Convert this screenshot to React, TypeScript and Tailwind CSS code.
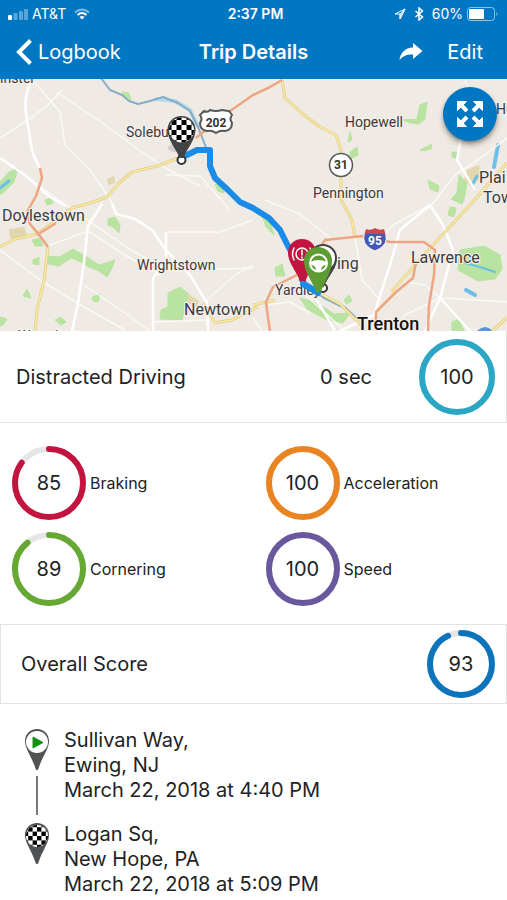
import type { ReactNode } from "react";

const CHECKS = [0, 1, 2, 3, 4, 5].flatMap((row) =>
  [0, 1, 2, 3, 4, 5].filter((col) => (row + col) % 2 === 0).map((col) => ({ row, col })),
);

function CheckeredDisc({ id, cx, cy, r }: { id: string; cx: number; cy: number; r: number }) {
  const size = (r * 2) / 5;
  return (
    <g>
      <clipPath id={id}>
        <circle cx={cx} cy={cy} r={r} />
      </clipPath>
      <circle cx={cx} cy={cy} r={r} fill="#fff" />
      <g clipPath={`url(#${id})`}>
        {CHECKS.map(({ row, col }) => (
          <rect
            key={`${row}-${col}`}
            x={cx - r + (col - 0.5) * size}
            y={cy - r + (row - 0.5) * size}
            width={size}
            height={size}
            fill="#000"
          />
        ))}
      </g>
    </g>
  );
}

function Pin({ id, kind }: { id: string; kind: "start" | "end" }) {
  return (
    <svg viewBox="0 0 26 44" className="h-11 w-[26px]" aria-hidden="true">
      <path d="M13 1C6 1 1 6.400 1 13c0 8 6.500 15 10.500 27.500.6 2 2.400 2 3 0C18.500 28 25 21 25 13 25 6.400 20 1 13 1z" fill="#505254" />
      {kind === "start" ? (
        <>
          <circle cx="13" cy="14" r="11" fill="#fff" />
          <path d="M9 9v11l10-5.500z" fill="#129412" stroke="#129412" strokeLinejoin="round" />
        </>
      ) : (
        <CheckeredDisc id={id} cx={13} cy={14} r={11} />
      )}
    </svg>
  );
}

function Ring({ value, color, size, box }: { value: number; color: string; size: number; box: string }) {
  const r = size / 2 - 3;
  const length = 2 * Math.PI * r;
  return (
    <div className={`relative flex shrink-0 items-center justify-center ${box}`}>
      <svg viewBox={`0 0 ${size} ${size}`} className="absolute inset-0 size-full -rotate-90" aria-hidden="true">
        <circle cx={size / 2} cy={size / 2} r={r} fill="none" stroke="#e6e6e8" strokeWidth="6" />
        <circle
          cx={size / 2}
          cy={size / 2}
          r={r}
          fill="none"
          stroke={color}
          strokeWidth="6"
          strokeLinecap="round"
          strokeDasharray={value === 100 ? undefined : `${(length * value) / 100} ${length}`}
        />
      </svg>
      <span className="text-xl">{value}</span>
    </div>
  );
}

function Metric({ value, color, label }: { value: number; color: string; label: string }) {
  return (
    <div className="flex items-center gap-1 pl-3">
      <Ring value={value} color={color} size={74} box="size-[74px]" />
      <span className="text-base">{label}</span>
    </div>
  );
}

const MINOR_ROADS = [
  "M35 83L60 112 65 145 90 170 105 192 115 208",
  "M57 92L98 120 135 147 165 168 200 186",
  "M0 158L45 190 80 215 128 248 165 270",
  "M0 250L40 280 84 307 125 330",
  "M62 90L48 105 25 122 0 138",
  "M48 246L88 231 125 255 160 275",
  "M84 285L125 313 150 331",
  "M253 220L220 232 166 232",
  "M253 268L160 271",
  "M207 300L235 275 253 265",
  "M153 322L210 320",
  "M165 175L200 176 230 210",
  "M265 200L300 214 330 238",
  "M380 240L393 225 430 205",
  "M465 80L472 100",
  "M507 138L478 160 455 175 430 207 418 215",
  "M395 331L405 315 440 298 507 302",
  "M440 298L425 285 405 282",
  "M300 290L345 331",
  "M266 305L290 302 310 313",
  "M355 237L362 280 380 300",
  "M253 318L262 331",
];

const MAJOR_ROADS = [
  "M30 84C23 100 25 112 29 130 31 150 33 156 40 168",
  "M0 158L25 175 50 197 66 206",
  "M102 204L88 226 84 262 78 303 72 331",
  "M112 204L116 214 135 219 152 230 166 250 190 275 207 303 208 331",
  "M153 331V278L166 262V232",
  "M462 132L457 160 475 190",
  "M430 205L400 230 393 255 374 315 340 331",
  "M430 205L443 225 453 250 440 298 425 331",
  "M440 298L470 331",
  "M300 283L320 305 335 331",
];

const YELLOW_ROADS = [
  "M181 157L157 166 132 172 119 183 107 197 90 203 72 208 54 222 37 234 15 239 0 247",
  "M48 247L44 280 37 310 35 331",
  "M282 80L285 98 303 114 320 127 336 135 341 150 341 200 352 220 355 237",
  "M507 163L470 205 433 245 391 292",
  "M203 303L215 323 232 320 258 307",
  "M253 305L275 300",
  "M318 292L340 304 362 326",
  "M507 318L492 331",
];

const ORANGE_ROADS = [
  "M40 168L42 178 36 196 27 212 30 224 40 236 48 247",
  "M37 235L56 223",
  "M196 138L220 118 253 95 270 87 282 80",
  "M297 275L273 287 266 302 268 318 270 331",
  "M320 248L325 240 363 236 390 242 424 242 435 250 434 275 429 305 428 331",
  "M416 262L413 278 396 292 376 312 376 322",
];

const PARKS = [
  "M0 182l9-10 9-4-4 14-9 9-5 4z",
  "M48 256l12 1 13-8 14 8 12 8 16-5-3 8-5 9-8-6-10-4-10-6-8-3-12 8-11-2z",
  "M108 219l7-2 5 8-1 8-6-6-5-2z",
  "M168 293l12-6 10 8-5 12-3 13-22-1 1-9 7-3z",
  "M32 240l8-2 3 8-8 0z",
  "M33 260l6-3 0 8-6-1z",
  "M23 296l4-7 4 9z",
  "M92 297l8-3-2 8-5-1z",
  "M55 320l6-3 5 5-5 3z",
  "M0 317l7 2-4 6-3 1z",
  "M403 120l14-1 3-14 7-3-2 17-6 5-8-1z",
  "M350 132l2 8-4 2z",
  "M350 152l7-5 1 8-8 4z",
  "M420 150l12-6-1 5-9 2z",
  "M428 180l11 6-1 6-8-3z",
  "M452 152l6 0 0 7-6-2z",
  "M459 175l8 8-2 12-3 9-11-5 6-6z",
  "M450 207l6 1-2 9-6-2z",
  "M460 250l24-4 16 9 2 14-7 10-17 2-20-11z",
  "M275 268l7-4 3 12-9 0z",
  "M300 298l16 4 18 12 16-1-7 10-18-4-18-10z",
  "M344 300l5-5 3 6-6 3z",
  "M262 215l8 6 4 14-8-8z",
  "M400 322l5 4-3 5-5 0z",
  "M452 322l7-3 5 12-12 0z",
  "M45 200l6-2 2 5-6 2z",
  "M122 92l7 1 2 7-8-4z",
  "M215 184l6 2 3 7-6-2z",
];

const ROUTE =
  "M187 155L197 150 210 150 210 166 215 178 228 190 240 202 253 208 269 218 280 230 288 246 296 260 304 284 318 292";

function TripMap() {
  return (
    <svg
      viewBox="0 79 507 252"
      preserveAspectRatio="xMidYMid slice"
      className="block h-[252px] w-full bg-[#f0eae4]"
      role="img"
      aria-label="Trip route from Ewing to New Hope"
      fontFamily="Roboto, 'Noto Sans', sans-serif"
    >
      <rect y="79" width="507" height="252" fill="#f0eae4" />
      <g fill="#b8e3a0" stroke="#b8e3a0" strokeLinejoin="round">
        {PARKS.map((d) => (
          <path key={d} d={d} />
        ))}
      </g>
      <g fill="#e1d6ae">
        <path d="M9 229l15-2 3 7-7 5-10-1z" />
        <path d="M107 179l7-3 1 7-7 2z" />
        <path d="M467 170l12-5 2 12-9 10-8-7z" />
        <path d="M187 293l12 8-2 6-9-4z" />
        <path d="M42 212l5-2-1 7z" />
      </g>
      <g fill="none" stroke="#86adc6" strokeLinecap="round" strokeLinejoin="round">
        <path d="M156 99L175 101 190 110 197 125" strokeWidth="4" stroke="#b3d9ea" />
        <path d="M101 78L110 90 122 95 129 101 138 104 150 101 163 97 178 103 190 111 198 127 207 150 214 178 240 203" strokeWidth="2" />
        <path d="M300 280L325 298 345 308 362 324" strokeWidth="3" />
        <path d="M498 145L494 167" strokeWidth="4" stroke="#6bbfe8" />
        <path d="M477 176L472 185" strokeWidth="3" stroke="#6bbfe8" />
        <path d="M465 263L480 267 495 272" strokeWidth="2" stroke="#6bbfe8" />
        <path d="M466 290L475 295" strokeWidth="4" stroke="#6bbfe8" />
        <path d="M0 188L9 181" strokeWidth="3" stroke="#6bbfe8" />
        <path d="M479 332q6-6 12 0" strokeWidth="4" stroke="#5b93dc" />
      </g>
      <g fill="none" stroke="#fbf9f6" strokeWidth="1.5" strokeLinejoin="round">
        {MINOR_ROADS.map((d) => (
          <path key={d} d={d} />
        ))}
      </g>
      <g fill="none" stroke="#ffffff" strokeWidth="2.500" strokeLinejoin="round">
        {MAJOR_ROADS.map((d) => (
          <path key={d} d={d} />
        ))}
      </g>
      <g fill="none" strokeLinejoin="round">
        {YELLOW_ROADS.map((d) => (
          <g key={d}>
            <path d={d} stroke="#e2cd83" strokeWidth="3" />
            <path d={d} stroke="#f9eaa8" strokeWidth="1.5" />
          </g>
        ))}
        {ORANGE_ROADS.map((d) => (
          <path key={d} d={d} stroke="#eda582" strokeWidth="2.500" />
        ))}
      </g>

      <g fill="#3b3b3d" stroke="#f6f1ec" strokeWidth="2" paintOrder="stroke" fontSize="14">
        <text x="0" y="83">inster</text>
        <text x="126" y="137">Solebury</text>
        <text x="345" y="127">Hopewell</text>
        <text x="313" y="198">Pennington</text>
        <text x="137" y="270">Wrightstown</text>
        <text x="275" y="295">Yardley</text>
        <text x="496" y="114">Hi</text>
        <g fontSize="16">
          <text x="2" y="221">Doylestown</text>
          <text x="184" y="315">Newtown</text>
          <text x="411" y="263">Lawrence</text>
          <text x="316" y="269">Ewing</text>
          <text x="479" y="183">Plai</text>
          <text x="483" y="203">Tow</text>
          <text x="18" y="341" fontSize="14">Warminster</text>
        </g>
        <text x="357" y="330" fontSize="18" fontWeight="500" fill="#111">Trenton</text>
      </g>

      <path d="M204 111q4 2 6-1 6 2 12 0 5 1 7 1l3 4q-3 4 0 8 0 7-7 8-5-1-9 2-4-3-9-2-7-1-7-8 3-4 0-8z" fill="#fff" stroke="#58595b" strokeWidth="2" />
      <text x="216" y="127" fontSize="12" fontWeight="700" textAnchor="middle" fill="#333">202</text>
      <circle cx="341" cy="165" r="11.500" fill="#fff" stroke="#58595b" strokeWidth="1.5" />
      <text x="341" y="169" fontSize="12" fontWeight="700" textAnchor="middle" fill="#333">31</text>
      <path d="M366 229q5 2 9-1 5 3 9 1 5 12-1 17-3 3-8 5-5-2-8-5-6-6-1-17z" fill="#4258b4" stroke="#fff" />
      <path d="M366 229q5 2 9-1 5 3 9 1l1.500 5h-21z" fill="#d2444c" />
      <text x="375" y="245" fontSize="12" fontWeight="700" textAnchor="middle" fill="#fff">95</text>

      <path d={ROUTE} fill="none" stroke="#1a8be6" strokeWidth="6" strokeLinecap="round" strokeLinejoin="round" />

      <ellipse cx="175" cy="148" rx="7" ry="4" fill="#000" opacity="0.120" />
      <path d="M181.500 116c-8 0-14 6-14 14 0 9 7 17 11.500 26 1 2 4 2 5 0 4.500-9 11.500-17 11.500-26 0-8-6-14-14-14z" fill="#414345" />
      <CheckeredDisc id="map-finish" cx={181.5} cy={130} r={12.5} />
      <circle cx="181.500" cy="160" r="4" fill="#fff" stroke="#333" strokeWidth="2" />
      <path d="M178 154h7l-1 4h-5z" fill="#414345" />

      <circle cx="323" cy="288" r="4" fill="#fff" stroke="#333" strokeWidth="2" />
      <path d="M323 244c-8 0-14 6-14 14 0 9 8 17 14 30 6-13 14-20 14-30 0-8-6-14-14-14z" fill="#414345" />
      <circle cx="323" cy="258" r="12" fill="#fff" />
      <path d="M302 239c-8 0-14 6-14 14 0 10 9 19 13 30 1 2 3 2 4 0 3-11 11-20 11-30 0-8-6-14-14-14z" fill="#c3143f" />
      <g fill="none" stroke="#fff" strokeWidth="1.500" strokeLinecap="round">
        <circle cx="302" cy="254" r="6" />
        <path d="M294 248q-3 6 0 12M310 248q3 6 0 12M302 250v5M302 257v1" />
      </g>
      <path d="M303 284L318 293" stroke="#1a8be6" strokeWidth="6" strokeLinecap="round" />
      <path d="M318 247c-8 0-14 6-14 14 0 10 7 18 12 30 1 2 4 2 5 0 5-12 11-20 11-30 0-8-6-14-14-14z" fill="#5c9c33" />
      <circle cx="318.500" cy="263" r="8.500" fill="none" stroke="#fff" strokeWidth="2" />
      <path d="M310 262q8.500-4 17 0l-1 3q-5 0-5 6h-5q0-6-5-6z" fill="#fff" />
    </svg>
  );
}

function StatusBar() {
  return (
    <div className="grid h-[27px] grid-cols-[1fr_auto_1fr] items-center px-2 text-sm">
      <div className="flex items-center gap-1">
        <svg viewBox="0 0 20 12" className="h-3 w-5" fill="#fff" aria-hidden="true">
          <rect x="0" y="7" width="4" height="5" rx="1" />
          <rect x="5.500" y="5" width="4" height="7" rx="1" opacity="0.350" />
          <rect x="11" y="3" width="4" height="9" rx="1" opacity="0.350" />
          <rect x="16" y="1" width="4" height="11" rx="1" opacity="0.350" />
        </svg>
        <span>AT&amp;T</span>
        <svg viewBox="0 0 16 12" className="ml-1 h-3 w-4" fill="none" stroke="#fff" strokeWidth="2" aria-hidden="true">
          <path d="M1 4.500Q8-1.500 15 4.500" opacity="0.500" />
          <path d="M3.500 7Q8 3 12.500 7" />
          <path d="M5.500 9Q8 7 10.500 9L8 11.500z" fill="#fff" stroke="none" />
        </svg>
      </div>
      <span className="pl-1 text-center font-semibold">2:37 PM</span>
      <div className="flex items-center justify-end gap-1 whitespace-nowrap">
        <svg viewBox="0 0 12 12" className="size-3" fill="none" stroke="#fff" aria-hidden="true">
          <path d="M11 1L1 6h5v5z" />
          <path d="M11 1L6 6v5z" fill="#fff" opacity="0.700" />
        </svg>
        <svg viewBox="0 0 10 14" className="ml-1 h-3.5 w-2.5" fill="none" stroke="#fff" strokeWidth="1.500" aria-hidden="true">
          <path d="M1.500 4l7 6L5 13V1l3.500 3-7 6" />
        </svg>
        <span className="ml-1">60%</span>
        <svg viewBox="0 0 32 14" className="h-3.5 w-8" aria-hidden="true">
          <rect x="0.500" y="0.500" width="27" height="13" rx="3" fill="none" stroke="#fff" opacity="0.550" />
          <rect x="2" y="2" width="15" height="10" rx="1" fill="#fff" />
          <path d="M29.500 5v4q2-2 0-4z" fill="#fff" opacity="0.600" />
        </svg>
      </div>
    </div>
  );
}

function Stop({ place, city, time, children }: { place: string; city: string; time: string; children: ReactNode }) {
  return (
    <li className="flex gap-3.5">
      <div className="flex w-[26px] shrink-0 flex-col items-center">{children}</div>
      <p>
        {place}
        <br />
        {city}
        <br />
        {time}
      </p>
    </li>
  );
}

export default function App() {
  return (
    <div className="min-h-screen bg-white font-[Inter,'Liberation_Sans',sans-serif] text-[#222224]">
      <header className="bg-[#0077c3] text-white">
        <StatusBar />
        <nav className="grid h-[52px] grid-cols-[1fr_auto_1fr] items-center pr-6 pb-0.5 pl-4 text-xl">
          <a href="#logbook" className="flex items-center gap-1.5">
            <svg viewBox="0 0 16 26" className="h-[26px] w-4" fill="none" stroke="#fff" strokeWidth="4" aria-hidden="true">
              <path d="M14.500 1.500L3 13l11.500 11.500" />
            </svg>
            Logbook
          </a>
          <h1 className="pl-2 font-semibold">Trip Details</h1>
          <div className="flex items-center justify-end gap-6">
            <button type="button" aria-label="Share">
              <svg viewBox="0 0 24 18" className="h-[18px] w-6" fill="#fff" aria-hidden="true">
                <path d="M14 0l9.500 8L14 16v-4.500C8 11 3.500 13 .5 17 1.500 9.500 6 5 14 4.500z" />
              </svg>
            </button>
            <button type="button">Edit</button>
          </div>
        </nav>
      </header>

      <main>
        <div className="relative">
          <TripMap />
          <button
            type="button"
            aria-label="Expand map"
            className="absolute top-2 right-2.5 flex size-[54px] items-center justify-center rounded-full bg-[#0077c3] shadow-md shadow-black/40"
          >
            <svg viewBox="0 0 28 28" className="size-7" fill="#fff" stroke="#fff" aria-hidden="true">
              {[0, 90, 180, 270].map((angle) => (
                <g key={angle} transform={`rotate(${angle} 14 14)`}>
                  <path d="M1.500 1.500h9l-9 9z" />
                  <path d="M4 4l7 7" strokeWidth="4" />
                </g>
              ))}
            </svg>
          </button>
        </div>

        <section className="flex h-[92px] items-center border-r border-b border-[#e2e2e4] pr-[11px] pl-4 text-xl">
          <h2 className="flex-1">Distracted Driving</h2>
          <span className="mr-[47px]">0 sec</span>
          <Ring value={100} color="#2ba6c4" size={76} box="size-[76px]" />
        </section>

        <section className="grid grid-cols-2 gap-y-3 pt-[23px] pb-[18px]">
          <Metric value={85} color="#c3143f" label="Braking" />
          <Metric value={100} color="#e98420" label="Acceleration" />
          <Metric value={89} color="#66a832" label="Cornering" />
          <Metric value={100} color="#6a589f" label="Speed" />
        </section>

        <section className="flex h-20 items-center justify-between border border-[#e2e2e4] pr-[11px] pl-5 text-xl">
          <h2>Overall Score</h2>
          <Ring value={93} color="#0b74bb" size={68} box="size-[68px]" />
        </section>

        <ol className="flex flex-col gap-[19px] px-6 pt-6 text-xl leading-[25px]">
          <Stop place="Sullivan Way," city="Ewing, NJ" time="March 22, 2018 at 4:40 PM">
            <Pin id="stop-start" kind="start" />
            <div className="mt-1 -mb-3 w-0.5 flex-1 bg-[#77787a]" />
          </Stop>
          <Stop place="Logan Sq," city="New Hope, PA" time="March 22, 2018 at 5:09 PM">
            <Pin id="stop-end" kind="end" />
          </Stop>
        </ol>
      </main>
    </div>
  );
}
